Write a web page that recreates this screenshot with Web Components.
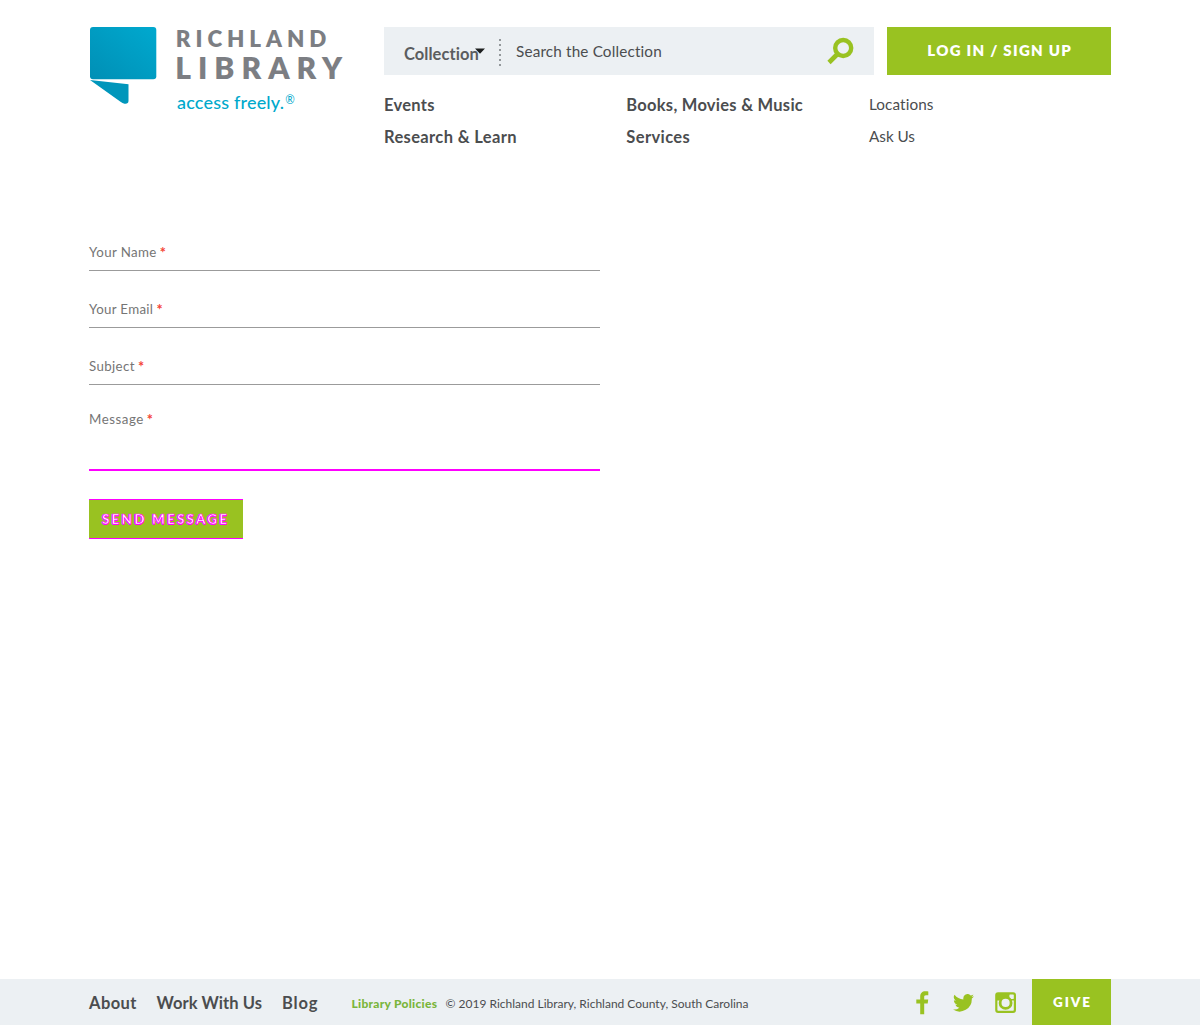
<!DOCTYPE html>
<html lang="en">
<head>
<meta charset="utf-8">
<title>Richland Library</title>
<style>
html,body{margin:0;background:#fff}
body{font-family:Lato,"Open Sans",sans-serif;color:#4b4d4f}
</style>
</head>
<body>
<library-page></library-page>
<script>
const define = (name, html) => customElements.define(name, class extends HTMLElement {
  connectedCallback() {
    if (this.shadowRoot) return;
    this.attachShadow({ mode: 'open' }).innerHTML = html;
  }
});

// One line of text whose tracking is adjusted to fill its nominal width.
customElements.define('tracked-text', class extends HTMLElement {
  connectedCallback() {
    if (this.shadowRoot) return;
    this.attachShadow({ mode: 'open' }).innerHTML =
      '<style>:host{display:block;white-space:nowrap}span{display:inline-block}</style><span><slot></slot></span>';
    const target = parseFloat(this.getAttribute('w'));
    const span = this.shadowRoot.querySelector('span');
    const n = this.textContent.length;
    const gap = (target - span.getBoundingClientRect().width) / (n - 1);
    span.style.letterSpacing = gap + 'px';
    this.style.width = target + 'px';
  }
});

define('library-logo', `
<style>:host{display:block;width:295px;height:100px}svg{display:block}text{font-family:Lato,sans-serif}</style>
<svg width="270" height="100" viewBox="89 20 270 100">
  <defs>
    <linearGradient id="g" x1="0" y1="1" x2="1" y2="0"><stop offset="0" stop-color="#008fb5"/><stop offset="1" stop-color="#00a9cf"/></linearGradient>
  </defs>
  <rect x="90" y="27" width="66.3" height="52.3" rx="3" fill="url(#g)"/>
  <path d="M90 80 L128.5 84.3 V101 Q128.3 104.3 124.5 103.7 Q122.500 103.300 120.500 101.700 Z" fill="#0096bb"/>
  <text x="175.800" y="46.700" font-size="22.400" font-weight="800" fill="#7c7e83" textLength="150.500" lengthAdjust="spacing">RICHLAND</text>
  <text x="175.200" y="78.800" font-size="30" font-weight="800" fill="#7c7e83" textLength="167" lengthAdjust="spacing">LIBRARY</text>
  <text x="177" y="109" font-size="18" font-weight="500" fill="#00a9cc" textLength="107" lengthAdjust="spacing">access freely.</text>
  <text x="285.300" y="104" font-size="13" fill="#00a9cc" textLength="9.500" lengthAdjust="spacingAndGlyphs">®</text>
</svg>`);

define('search-bar', `
<style>
:host{display:flex;box-sizing:border-box;width:490px;height:48px;background:#ecf0f3;padding-left:20px;align-items:center}
.kind{font-weight:700;font-size:16.500px;line-height:20px;color:#5b5d5f;padding-top:5px;position:relative}
.arrow{position:absolute;left:71px;top:9px;display:block}
.dots{margin-left:20px;margin-top:3px;display:block}
.query{font-size:15.300px;line-height:20px;margin-left:15px;margin-top:-1px}
.lens{margin-left:165px;display:block}
</style>
<div class="kind"><tracked-text w="75">Collection</tracked-text>
<svg class="arrow" width="10" height="6"><path d="M0 0.500H10L5 5.800Z" fill="#1d1f1f"/></svg></div>
<svg class="dots" width="2" height="27"><path d="M1 0V27" stroke="#93989b" stroke-width="2" stroke-dasharray="2 3"/></svg>
<div class="query"><tracked-text w="146">Search the Collection</tracked-text></div>
<svg class="lens" width="27" height="28" viewBox="0 0 27 28" fill="none" stroke="#99c221"><circle cx="16.200" cy="11" r="8" stroke-width="4.400"/><path d="M10.500 17 L2 25.500" stroke-width="4.600"/></svg>`);

define('solid-button', `
<style>
:host{display:flex;box-sizing:border-box;align-items:center;justify-content:center;background:#99c221;color:#fff;font-weight:800}
</style><slot></slot>`);

define('main-nav', `
<style>
:host{display:grid;grid-template-columns:242.300px 242.700px auto;grid-auto-rows:32px;margin-top:13px;line-height:34px;font-size:16.500px;font-weight:700}
.light{font-weight:400;font-size:15.300px;line-height:32px}
</style>
<tracked-text w="50.500">Events</tracked-text>
<tracked-text w="176.500">Books, Movies &amp; Music</tracked-text>
<tracked-text class="light" w="64.700">Locations</tracked-text>
<tracked-text w="132.500">Research &amp; Learn</tracked-text>
<tracked-text w="63.500">Services</tracked-text>
<tracked-text class="light" w="46">Ask Us</tracked-text>`);

define('site-header', `
<style>
:host{display:flex;padding-top:20px}
.right{flex:1;padding-top:7px}
.top{display:flex;justify-content:space-between}
solid-button{width:224px;height:48px;font-size:15px;padding-bottom:2px}
</style>
<library-logo></library-logo>
<div class="right">
  <div class="top"><search-bar></search-bar><solid-button><tracked-text w="143.500">LOG IN / SIGN UP</tracked-text></solid-button></div>
  <main-nav></main-nav>
</div>`);

define('form-field', `
<style>
:host{display:flex;box-sizing:border-box;height:57px;padding-top:28px;border-bottom:1px solid #9b9b9b;font-size:13.300px;line-height:20px;color:#757575;gap:3.500px}
:host([active]){height:86px;border-bottom:2px solid #f0f;padding-top:24px}
.star{color:#f44336;font-size:14.500px;font-weight:700;line-height:22px}
</style><slot></slot><span class="star">*</span>`);

define('contact-form', `
<style>
:host{display:block;width:511px;padding-top:62px}
solid-button{margin-top:28px;width:154px;height:40px;border-top:1px solid #f0f;border-bottom:1px solid #f0f;font-size:13.500px;font-weight:900;padding-right:3px}
solid-button tracked-text{-webkit-text-stroke:.7px #f0f;text-shadow:-.8px 0 #f0f,0 1px #f0f}
</style>
<form-field><tracked-text w="67.300">Your Name</tracked-text></form-field>
<form-field><tracked-text w="64">Your Email</tracked-text></form-field>
<form-field><tracked-text w="45.500">Subject</tracked-text></form-field>
<form-field active><tracked-text w="54.300">Message</tracked-text></form-field>
<solid-button><tracked-text w="125">SEND MESSAGE</tracked-text></solid-button>`);

define('social-links', `
<style>:host{display:flex;align-items:center;height:46px;padding-top:1px;box-sizing:border-box}svg{display:block;fill:#99c221}</style>
<svg width="13" height="24" viewBox="0 0 13 24"><path d="M12.300 .5V4.300H10C8.500 4.300 8.200 5 8.200 6V8.600H12.200L11.700 12.400H8.200V23.300H4.200V12.400H.3V8.600H4.200V5.600C4.200 2.300 6.200 .3 9.300 .3C10.700 .3 11.700 .4 12.300 .5Z"/></svg>
<svg style="margin-left:24px" width="21" height="18" viewBox="1.500 4 21 17.500" preserveAspectRatio="none"><path d="M22.500 6.100a8.600 8.600 0 0 1-2.500.7 4.300 4.300 0 0 0 1.900-2.400 8.600 8.600 0 0 1-2.700 1A4.300 4.300 0 0 0 11.900 9.300 12.200 12.200 0 0 1 3 4.800a4.300 4.300 0 0 0 1.300 5.700 4.300 4.300 0 0 1-1.900-.5 4.300 4.300 0 0 0 3.400 4.200 4.300 4.300 0 0 1-1.900.1 4.300 4.300 0 0 0 4 3 8.600 8.600 0 0 1-6.400 1.800 12.200 12.200 0 0 0 18.800-10.800 8.700 8.700 0 0 0 2.200-2.200Z"/></svg>
<svg style="margin-left:21px" width="22" height="22" viewBox="0 0 22 22"><rect x="1.300" y="1.300" width="18.600" height="18.600" rx="1.800" style="fill:none" stroke="#99c221" stroke-width="2.200"/><path d="M1.500 8.500H20V2H1.500Z"/><rect x="14.400" y="2.500" width="4.400" height="4.400" rx=".6" style="fill:#ecf0f3"/><circle cx="10.600" cy="10.900" r="5.500" style="fill:#ecf0f3" stroke="#99c221" stroke-width="2.800"/></svg>`);

define('site-footer', `
<style>
:host{display:block;background:#ecf0f3;height:46px}
.row{display:flex;width:1022px;margin:0 auto;align-items:center;height:46px}
nav{display:flex;gap:20px;font-size:16.500px;line-height:20px;font-weight:700;padding-top:1px}
.legal{display:flex;gap:8.500px;font-size:12px;margin-left:34px;padding-top:3px;flex:1}
.policy{color:#7ab53b;font-weight:900;font-size:12px}
solid-button{width:79px;height:46px;margin-left:15px;font-size:13.500px}
</style>
<div class="row">
<nav><tracked-text w="47.500">About</tracked-text><tracked-text w="105.500">Work With Us</tracked-text><tracked-text w="35.500">Blog</tracked-text></nav>
<div class="legal"><tracked-text class="policy" w="85.500">Library Policies</tracked-text><tracked-text w="303">© 2019 Richland Library, Richland County, South Carolina</tracked-text></div>
<social-links></social-links>
<solid-button><tracked-text w="37">GIVE</tracked-text></solid-button>
</div>`);

define('library-page', `
<style>
:host{display:flex;flex-direction:column;height:1025px}
main,site-header{width:1022px;margin:0 auto}
main{flex:1}
</style>
<site-header></site-header>
<main><contact-form></contact-form></main>
<site-footer></site-footer>`);
</script>
</body>
</html>
